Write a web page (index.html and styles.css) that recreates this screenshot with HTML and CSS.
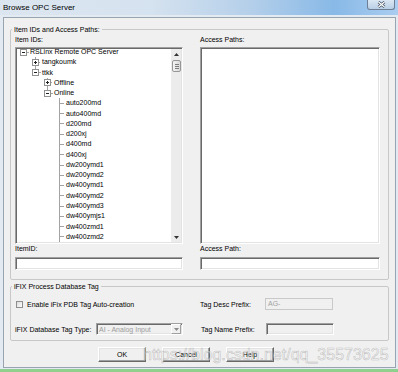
FILE: index.html
```html
<!DOCTYPE html>
<html>
<head>
    <meta charset="UTF-8">
    <title>Browse OPC Server</title>
    <link rel="stylesheet" href="styles.css">
</head>
<body>
    <div class="window">
        <div class="titlebar">
            <span class="title-text">Browse OPC Server</span>
            <button type="button" class="close-btn">
                <svg width="9" height="7" viewBox="0 0 9 7">
                    <path d="M1.5 1L7.5 6M7.5 1L1.5 6" stroke="#3a4656" stroke-width="2.6"/>
                    <path d="M1.5 1L7.5 6M7.5 1L1.5 6" stroke="#fff" stroke-width="1.3"/>
                </svg>
            </button>
        </div>

        <div class="frame">
            <div class="client">
                <fieldset class="group group-paths">
                    <legend>Item IDs and Access Paths:</legend>
                    <div class="paths-body">
                        <div class="col">
                            <div class="field-label top">Item IDs:</div>
                            <div class="listbox sunken tree">
                                <div class="tree-rows">
                                    <div class="tree-list">
                                        <div class="tree-row l0"><span class="gutter g-root"><svg class="node" width="7" height="7"><rect x=".5" y=".5" width="6" height="6" fill="#fff" stroke="#919191"/><path d="M2 3.5h3" stroke="#222"/></svg></span>RSLinx Remote OPC Server</div>
                                        <div class="tree-row l1"><span class="gutter g-mid"><svg class="node" width="7" height="7"><rect x=".5" y=".5" width="6" height="6" fill="#fff" stroke="#919191"/><path d="M2 3.5h3M3.5 2v3" stroke="#222"/></svg></span>tangkoumk</div>
                                        <div class="tree-row l1"><span class="gutter g-last"><svg class="node" width="7" height="7"><rect x=".5" y=".5" width="6" height="6" fill="#fff" stroke="#919191"/><path d="M2 3.5h3" stroke="#222"/></svg></span>ttkk</div>
                                        <div class="tree-row l2"><span class="gutter g-mid"><svg class="node" width="7" height="7"><rect x=".5" y=".5" width="6" height="6" fill="#fff" stroke="#919191"/><path d="M2 3.5h3M3.5 2v3" stroke="#222"/></svg></span>Offline</div>
                                        <div class="tree-row l2"><span class="gutter g-last"><svg class="node" width="7" height="7"><rect x=".5" y=".5" width="6" height="6" fill="#fff" stroke="#919191"/><path d="M2 3.5h3" stroke="#222"/></svg></span>Online</div>
                                        <div class="tree-row l3"><span class="gutter g-leaf"></span>auto200md</div>
                                        <div class="tree-row l3"><span class="gutter g-leaf"></span>auto400md</div>
                                        <div class="tree-row l3"><span class="gutter g-leaf"></span>d200md</div>
                                        <div class="tree-row l3"><span class="gutter g-leaf"></span>d200xj</div>
                                        <div class="tree-row l3"><span class="gutter g-leaf"></span>d400md</div>
                                        <div class="tree-row l3"><span class="gutter g-leaf"></span>d400xj</div>
                                        <div class="tree-row l3"><span class="gutter g-leaf"></span>dw200ymd1</div>
                                        <div class="tree-row l3"><span class="gutter g-leaf"></span>dw200ymd2</div>
                                        <div class="tree-row l3"><span class="gutter g-leaf"></span>dw400ymd1</div>
                                        <div class="tree-row l3"><span class="gutter g-leaf"></span>dw400ymd2</div>
                                        <div class="tree-row l3"><span class="gutter g-leaf"></span>dw400ymd3</div>
                                        <div class="tree-row l3"><span class="gutter g-leaf"></span>dw400ymjs1</div>
                                        <div class="tree-row l3"><span class="gutter g-leaf"></span>dw400zmd1</div>
                                        <div class="tree-row l3"><span class="gutter g-leaf"></span>dw400zmd2</div>
                                    </div>
                                </div>
                                <div class="scrollbar">
                                    <div class="sb-btn"><svg width="5" height="3"><path d="M0 3L2.5 0L5 3Z" fill="#333"/></svg></div>
                                    <div class="sb-track">
                                        <div class="sb-thumb"><span class="grip"></span></div>
                                    </div>
                                    <div class="sb-btn"><svg width="5" height="3"><path d="M0 0L2.5 3L5 0Z" fill="#333"/></svg></div>
                                </div>
                            </div>
                            <div class="field-label">ItemID:</div>
                            <div class="textbox sunken"></div>
                        </div>

                        <div class="col">
                            <div class="field-label top">Access Paths:</div>
                            <div class="listbox sunken"></div>
                            <div class="field-label">Access Path:</div>
                            <div class="textbox sunken"></div>
                        </div>
                    </div>
                </fieldset>

                <fieldset class="group group-tag">
                    <legend>iFIX Process Database Tag</legend>
                    <div class="tag-body">
                        <div class="tag-row">
                            <span class="checkbox"></span>
                            <span class="check-label">Enable iFix PDB Tag Auto-creation</span>
                        </div>
                        <div class="tag-row">
                            <span class="tag-label">Tag Desc Prefix:</span>
                            <div class="textbox flat">AG-</div>
                        </div>
                        <div class="tag-row spread">
                            <span>iFIX Database Tag Type:</span>
                            <div class="combo sunken">
                                <span class="combo-text">AI - Analog Input</span>
                                <span class="combo-btn"><svg width="5" height="3"><path d="M0 0L2.5 3L5 0Z" fill="#8a8a8a"/></svg></span>
                            </div>
                        </div>
                        <div class="tag-row shift">
                            <span class="tag-label">Tag Name Prefix:</span>
                            <div class="textbox sunken disabled"></div>
                        </div>
                    </div>
                </fieldset>

                <div class="buttons">
                    <button type="button" class="btn">OK</button>
                    <button type="button" class="btn">Cancel</button>
                    <button type="button" class="btn">Help</button>
                </div>
            </div>
        </div>
    </div>

    <div class="watermark">https://blog.csdn.net/qq_35573625</div>
</body>
</html>
```

FILE: styles.css
```css
/* Browse OPC Server dialog */
* {
    box-sizing: border-box;
}

body {
    margin: 0;
    width: 398px;
    height: 372px;
    overflow: hidden;
    position: relative;
    background: #8fd08f;
    font-family: "Liberation Sans", Arial, sans-serif;
    font-size: 7px;
    color: #000;
}

.window {
    width: 398px;
    height: 369px;
    display: flex;
    flex-direction: column;
    background: #e3eaf2;
}

/* Title bar */
.titlebar {
    height: 15px;
    display: flex;
    align-items: flex-start;
    background: linear-gradient(to right, #dce6f0 0%, #d5e2ef 38%, #b6d0ea 62%, #88b9e7 84%, #aacdf0 100%);
}

.title-text {
    font-size: 8px;
    line-height: 15px;
    padding-left: 3px;
}

.close-btn {
    margin-left: auto;
    margin-right: 3px;
    width: 28px;
    height: 10px;
    padding: 0;
    border: 1px solid #6d7f96;
    border-top: none;
    border-radius: 0 0 3px 3px;
    background: linear-gradient(#dbe7f3, #b9cfe6);
    display: flex;
    align-items: center;
    justify-content: center;
}

.frame {
    flex: 1;
    display: flex;
    padding: 2px 2px 1px 3px;
}

.client {
    flex: 1;
    display: flex;
    flex-direction: column;
    border: 1px solid #98a4b0;
    background: #f0f0f0;
}

/* Group boxes */
.group {
    margin: 0 6px;
    border: 1px solid #c8c8c8;
    border-radius: 2px;
    min-width: 0;
}

.group legend {
    line-height: 9px;
    padding: 0 2px;
    margin-left: -3px;
}

.group-paths {
    margin-top: 7px;
    padding: 1px 8px 9px 4px;
}

.group-tag {
    margin-top: 2px;
    padding: 7px 8px 5px 4px;
}

.paths-body,
.tag-body {
    display: grid;
    grid-template-columns: 168px 180px;
    column-gap: 17px;
}

.tag-body {
    row-gap: 13px;
}

.col {
    display: flex;
    flex-direction: column;
}

.field-label {
    height: 9px;
    line-height: 9px;
}

.field-label.top {
    margin-bottom: 3px;
}

/* 3D sunken edge */
.sunken {
    border: 1px solid;
    border-color: #a0a0a0 #fff #fff #a0a0a0;
    box-shadow: inset 1px 1px 0 #696969, inset -1px -1px 0 #e3e3e3;
    padding: 1px;
    background: #fff;
}

.listbox {
    height: 197px;
}

.textbox {
    height: 13px;
    margin-top: 4px;
}

/* Tree view */
.tree {
    display: flex;
}

.tree-rows {
    flex: 1;
    overflow: hidden;
}

.tree-list {
    margin-top: -2px;
}

.tree-row {
    display: flex;
    height: 10.28px;
    line-height: 10.28px;
    white-space: nowrap;
}

.tree-row.l0 { padding-left: 3px; }
.tree-row.l1 { padding-left: 15px; }
.tree-row.l2 { padding-left: 27px; }
.tree-row.l3 { padding-left: 39px; }

.gutter {
    width: 10px;
    flex: none;
    display: flex;
    align-items: center;
    background-repeat: no-repeat;
}

.node {
    display: block;
}

.g-root {
    background-image: linear-gradient(#a3a3a3, #a3a3a3);
    background-position: 7px 50%;
    background-size: 2px 1px;
}

.g-mid,
.g-leaf {
    background-image: linear-gradient(#a3a3a3, #a3a3a3), linear-gradient(#a3a3a3, #a3a3a3);
    background-position: 3px 0, 3px 50%;
    background-size: 1px 100%, 5px 1px;
}

.g-last {
    background-image: linear-gradient(#a3a3a3, #a3a3a3), linear-gradient(#a3a3a3, #a3a3a3);
    background-position: 3px 0, 3px 50%;
    background-size: 1px 50%, 6px 1px;
}

/* Scroll bar */
.scrollbar {
    width: 10px;
    display: flex;
    flex-direction: column;
    background: #ececec;
}

.sb-btn {
    height: 10px;
    display: flex;
    align-items: center;
    justify-content: center;
}

.sb-track {
    flex: 1;
    padding-top: 1px;
}

.sb-thumb {
    height: 12px;
    margin-left: 1px;
    border: 1px solid #979797;
    border-radius: 2px;
    background: linear-gradient(to right, #f4f4f4, #d9d9d9);
    display: flex;
    align-items: center;
    justify-content: center;
}

.grip {
    width: 4px;
    height: 5px;
    background: repeating-linear-gradient(#7d7d7d 0 1px, transparent 1px 2px);
}

/* iFIX tag section */
.tag-row {
    height: 12px;
    display: flex;
    align-items: center;
}

.tag-row.spread {
    justify-content: space-between;
}

.tag-row.shift {
    padding-left: 1px;
}

.checkbox {
    width: 7px;
    height: 7px;
    margin-left: 1px;
    border: 1px solid #8e8f8f;
    background: linear-gradient(135deg, #dcdcdc, #fdfdfd);
}

.check-label {
    margin-left: 4px;
}

.tag-label {
    width: 65px;
}

.tag-row .textbox {
    width: 68px;
    height: 12px;
    margin-top: 0;
    line-height: 10px;
    padding-left: 2px;
    color: #a0a0a0;
    background: #f0f0f0;
}

.textbox.flat {
    border: 1px solid #c9c9c9;
}

.combo {
    width: 87px;
    height: 12px;
    display: flex;
    align-items: center;
    background: #f0f0f0;
    color: #9c9c9c;
}

.combo-text {
    padding-left: 1px;
}

.combo-btn {
    margin-left: auto;
    width: 10px;
    height: 10px;
    display: flex;
    align-items: center;
    justify-content: center;
    border: 1px solid;
    border-color: #fff #a0a0a0 #a0a0a0 #fff;
    background: #f0f0f0;
}

/* Buttons */
.buttons {
    display: flex;
    gap: 16px;
    margin-top: 6px;
    padding-left: 94px;
}

.btn {
    width: 48px;
    height: 15px;
    padding: 0;
    font-family: inherit;
    font-size: 7px;
    color: #000;
    background: #f0f0f0;
    border: 1px solid;
    border-color: #fff #696969 #696969 #fff;
    box-shadow: inset -1px -1px 0 #a0a0a0, inset 1px 1px 0 #e3e3e3;
}

.watermark {
    position: absolute;
    left: 143px;
    top: 346px;
    font-size: 16px;
    line-height: 18px;
    color: rgba(255, 255, 255, 0.55);
    -webkit-text-stroke: 0.6px rgba(130, 130, 130, 0.45);
    white-space: nowrap;
}
```
